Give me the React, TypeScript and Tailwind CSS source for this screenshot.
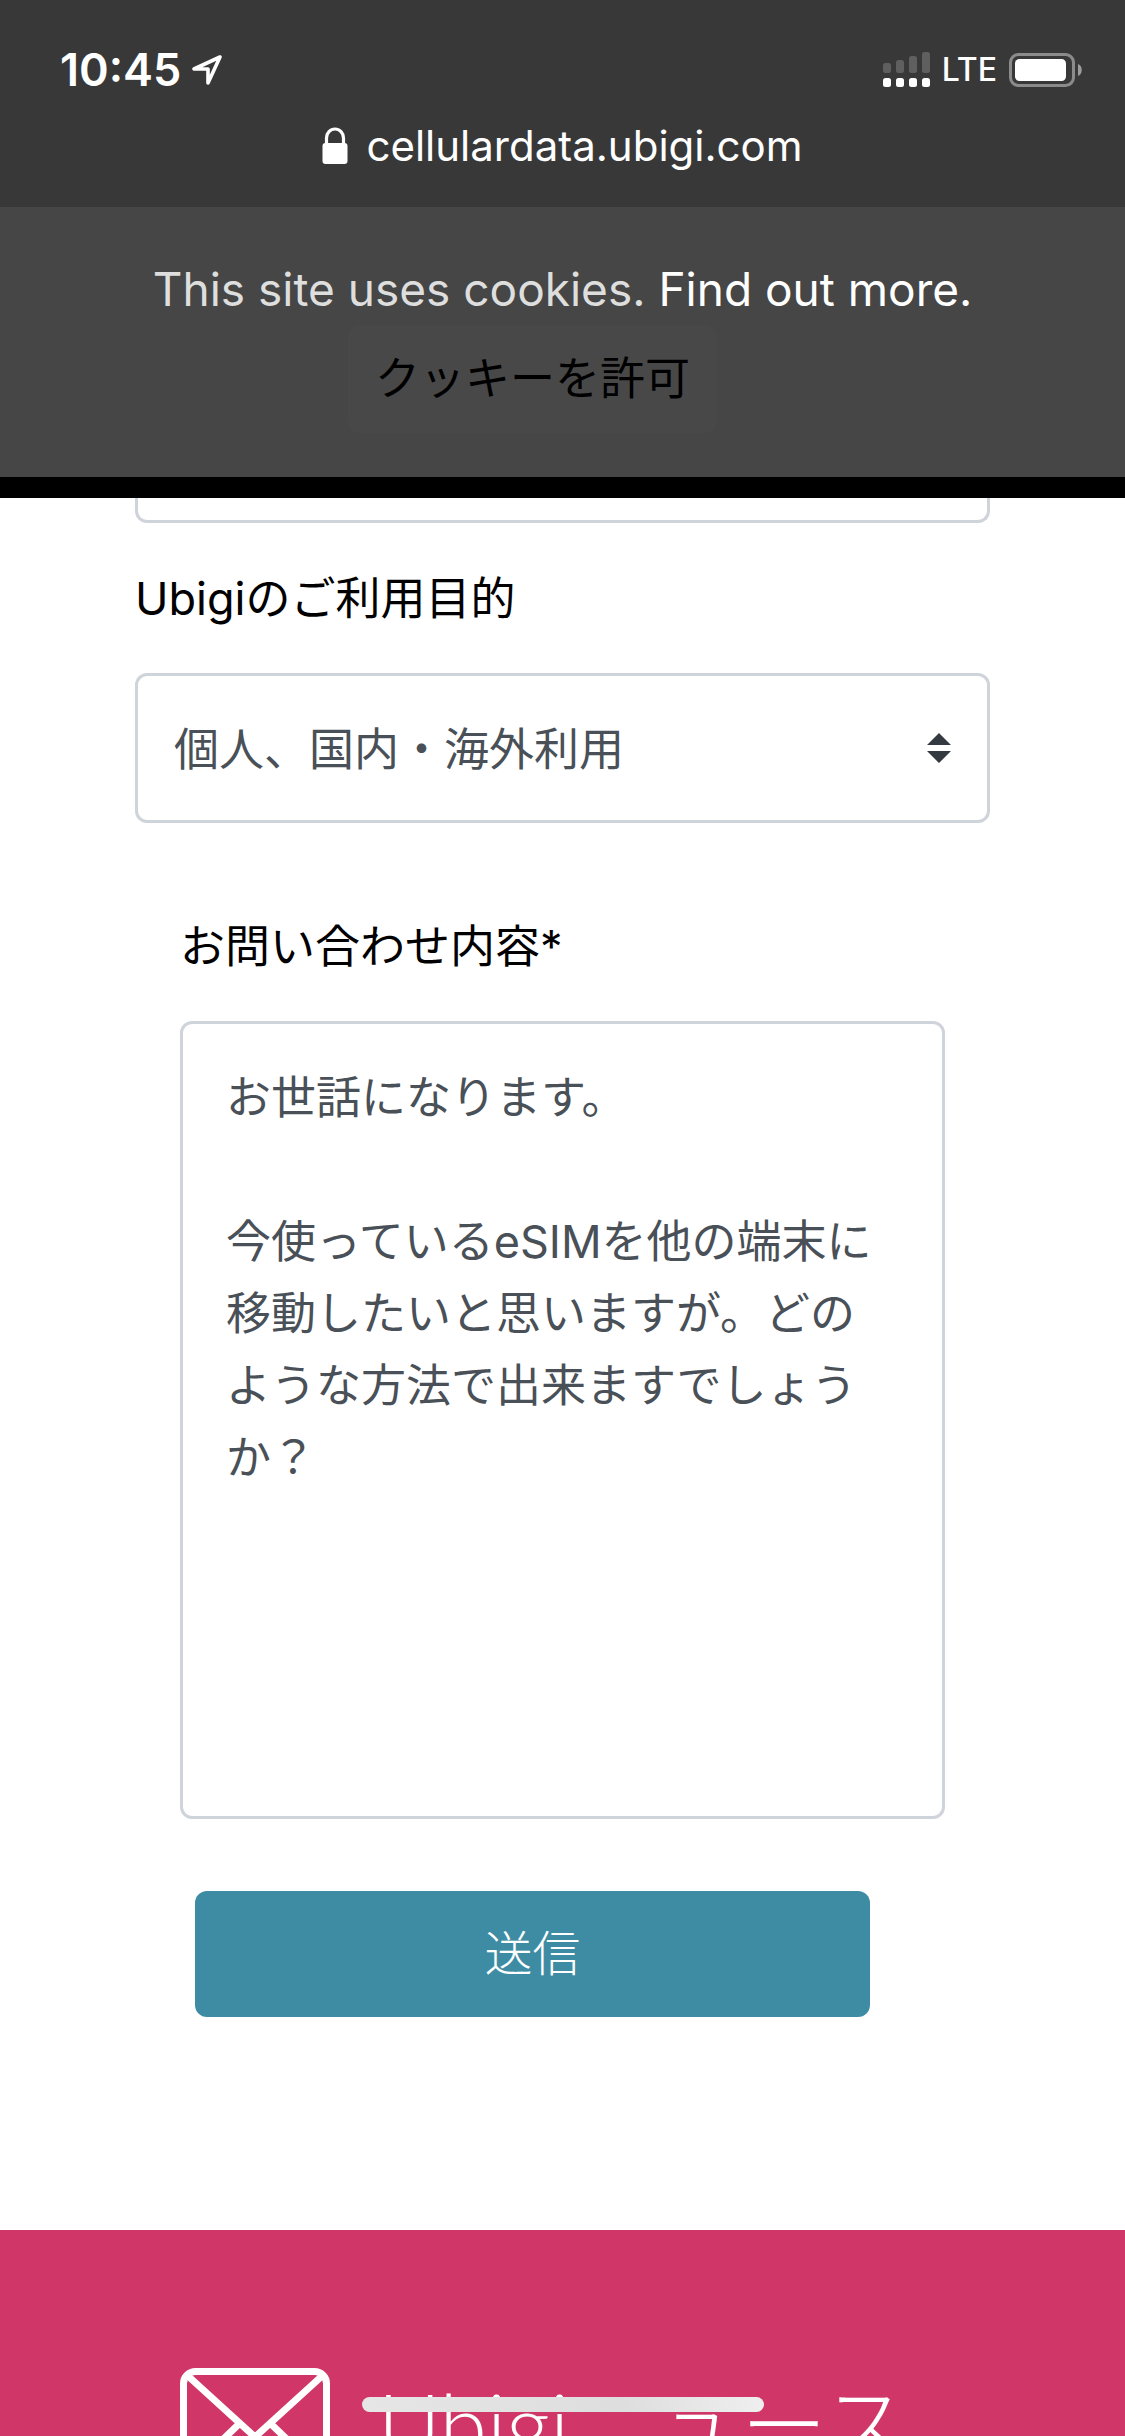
import { useState } from "react";

const MESSAGE = `お世話になります。

今使っているeSIMを他の端末に移動したいと思いますが。どのような方法で出来ますでしょうか？`;

const BARS = [
  { x: 0, y: 11 },
  { x: 13, y: 8 },
  { x: 26, y: 4 },
  { x: 39, y: 0 },
];

function LocationArrow() {
  return (
    <svg viewBox="0 0 32 32" className="h-8 w-8" fill="none" stroke="white" strokeWidth={3.6} strokeLinejoin="round" aria-hidden="true">
      <path d="M29 3 3 15h14v14z" />
    </svg>
  );
}

function SignalIcon() {
  return (
    <svg viewBox="0 0 47 36" className="h-9 w-[47px]" fill="white" aria-hidden="true">
      {BARS.map((b) => (
        <g key={b.x}>
          <rect x={b.x} y={b.y} width={8} height={21 - b.y} rx={2.5} opacity={0.2} />
          <rect x={b.x} y={26} width={8} height={9} rx={2.5} />
        </g>
      ))}
    </svg>
  );
}

function BatteryIcon() {
  return (
    <svg viewBox="0 0 74 34" className="h-[34px] w-[74px]" aria-hidden="true">
      <rect x={1.5} y={1.5} width={63} height={31} rx={8} fill="none" stroke="white" strokeOpacity={0.42} strokeWidth={3} />
      <rect x={6} y={6} width={51} height={22} rx={4.5} fill="white" />
      <path d="M69 11c5 1.5 5 10.5 0 12z" fill="white" opacity={0.5} />
    </svg>
  );
}

function LockIcon() {
  return (
    <svg viewBox="0 0 26 38" className="h-[38px] w-[26px]" aria-hidden="true">
      <path d="M4.5 18v-7a8.5 9 0 0 1 17 0v7" fill="none" stroke="white" strokeWidth={3.2} />
      <rect x={0.5} y={16} width={25} height={21} rx={3} fill="white" />
    </svg>
  );
}

function MailIcon() {
  return (
    <svg viewBox="0 0 150 114" className="h-[114px] w-[150px] shrink-0" fill="none" stroke="white" strokeWidth={7} aria-hidden="true">
      <rect x={3.5} y={3.5} width={143} height={107} rx={12} />
      <path d="M8 8l67 61L142 8M5 108l54-52M145 108L91 56" />
    </svg>
  );
}

export default function App() {
  const [purpose, setPurpose] = useState("personal");
  const [message, setMessage] = useState(MESSAGE);

  return (
    <div className="relative flex h-screen flex-col overflow-hidden bg-white font-['Inter','Noto_Sans_CJK_JP',sans-serif] text-[45px] text-black">
      {/* Status bar + address */}
      <header className="h-[207px] shrink-0 bg-[#383838] text-white">
        <div className="flex items-center justify-between pt-10 pr-[42px] pl-[60px]">
          <div className="flex items-center gap-2.5">
            <span className="text-[45px] leading-[60px] font-semibold">10:45</span>
            <LocationArrow />
          </div>
          <div className="flex items-center gap-3">
            <SignalIcon />
            <span className="text-[32px] leading-[60px] font-medium">LTE</span>
            <BatteryIcon />
          </div>
        </div>
        <div className="flex items-center justify-center gap-[18px] pt-4">
          <LockIcon />
          <span className="text-[42px] leading-[60px]">cellulardata.ubigi.com</span>
        </div>
      </header>

      {/* Cookie notice */}
      <section className="flex h-[291px] shrink-0 flex-col items-center border-b-[21px] border-black bg-[#464646] pt-[46px]">
        <p className="text-[46px] leading-[72px] text-[#dedede]">
          This site uses cookies.{" "}
          <a href="#cookies" className="text-white">Find out more.</a>
        </p>
        <button type="button" className="mr-[60px] h-[108px] rounded-xl bg-[#484848] px-[27px] font-[390] text-black">
          クッキーを許可
        </button>
      </section>

      <form className="shrink-0 px-[135px] font-[390]" onSubmit={(e) => e.preventDefault()}>
        <input
          type="text"
          aria-label="お名前"
          className="block h-[25px] w-full rounded-b-xl border-[3px] border-t-0 border-[#ced4da] bg-white px-9"
        />

        <label htmlFor="purpose" className="mt-10 block leading-[72px]">Ubigiのご利用目的</label>
        <div className="relative mt-[38px]">
          <select
            id="purpose"
            value={purpose}
            onChange={(e) => setPurpose(e.target.value)}
            className="block h-[150px] w-full appearance-none rounded-xl border-[3px] border-[#ced4da] bg-white px-9 pt-1 text-[#495057]"
          >
            <option value="personal">個人、国内・海外利用</option>
          </select>
          <svg viewBox="0 0 24 30" className="pointer-events-none absolute top-[60px] right-[39px] h-[30px] w-6 fill-[#343a40]" aria-hidden="true">
            <path d="M12 0l12 12H0zM12 30L0 18h24z" />
          </svg>
        </div>

        <div className="px-[45px]">
          <label htmlFor="message" className="mt-[88px] block leading-[72px]">お問い合わせ内容*</label>
          <textarea
            id="message"
            value={message}
            onChange={(e) => setMessage(e.target.value)}
            className="mt-[38px] block h-[798px] w-full resize-none rounded-xl border-[3px] border-[#ced4da] bg-white px-[43px] py-[38px] leading-[72px] text-[#495057]"
          />
          <div className="pt-[72px] pr-[75px] pl-[15px]">
            <button type="submit" className="h-[126px] w-full rounded-xl bg-[#3e8ca3] text-[48px] font-light text-white">
              送信
            </button>
          </div>
        </div>
      </form>

      {/* Newsletter */}
      <footer className="mt-[213px] flex min-h-0 flex-1 items-start gap-12 overflow-hidden bg-[#d03667] px-[180px] pt-[138px] text-white">
        <MailIcon />
        <h2 className="font-['Lato','Noto_Sans_CJK_JP',sans-serif] text-[86px] leading-[112px] font-light whitespace-nowrap">Ubigiニュース</h2>
      </footer>

      {/* Home indicator */}
      <div className="absolute bottom-6 left-1/2 h-[15px] w-[402px] -translate-x-1/2 rounded-full bg-linear-to-r from-[#e6e6e6] via-[#dedede] via-65% to-[#efefef]" />
    </div>
  );
}
